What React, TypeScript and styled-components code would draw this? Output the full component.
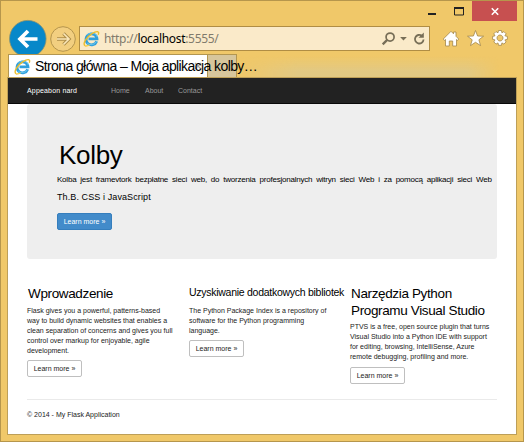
import React from 'react';
import styled, { createGlobalStyle, css } from 'styled-components';

const Global = createGlobalStyle`
  *{box-sizing:border-box}
  body{margin:0;overflow:hidden;font-family:"Liberation Sans",Arial,sans-serif}
  p,h1,h2{margin:0;font-weight:400}
`;

const Window = styled.div`
  width:524px;height:442px;background:#f0c869;border:1px solid #b6964c;
  display:flex;flex-direction:column;
`;
const TitleBar = styled.div`
  height:20px;display:flex;justify-content:flex-end;padding-right:6px;
`;
const WindowButtons = styled.svg`display:block;width:98px;height:20px;`;
const AddressRow = styled.div`
  height:33px;display:flex;align-items:flex-start;padding-left:7px;
`;
const NavButtons = styled.svg`display:block;width:71px;height:33px;flex:none;`;
const AddressBox = styled.div`
  width:351px;height:25px;margin-top:5px;border:1px solid #b08d44;background:#faeac9;
  display:flex;align-items:center;padding-left:3px;
`;
const Url = styled.div`
  width:294px;padding-left:4px;color:#000;white-space:nowrap;
  font:12px/20px "Noto Sans","Open Sans",sans-serif;letter-spacing:-0.32px;
  padding-bottom:0;margin-top:1px;
  span{color:#817b6c}
`;
const AddressIcons = styled.svg`display:block;width:50px;height:23px;`;
const ToolIcons = styled.svg`display:block;width:76px;height:24px;margin:5px 0 0 10px;`;

const TabRow = styled.div`
  height:23px;margin-left:7px;display:flex;width:508px;position:relative;
`;
const TabGlow = styled.div`
  flex:1;height:23px;
  background:linear-gradient(to bottom,transparent 2px,#e2c983 17px);
  mask-image:linear-gradient(to right,transparent,#000 60px,#000 230px,transparent 262px);
`;
const Tab = styled.div`
  width:200px;height:23px;background:#fff;border:1px solid #b39650;border-bottom:0;
  display:flex;align-items:center;padding-left:5px;gap:4px;flex:none;
`;
const NewTab = styled.div`
  width:29px;height:23px;background:#d7c69c;border:1px solid #b39650;border-left:0;border-bottom:0;
`;
const TabClose = styled.svg`position:absolute;left:186px;top:8px;width:8px;height:8px;`;
const TabTitle = styled.div`
  white-space:nowrap;font:14px/21px "Liberation Sans",Arial,sans-serif;color:#000;
  letter-spacing:-0.6px;position:relative;z-index:1;
`;
const Viewport = styled.div`
  width:510px;height:358px;margin-left:6px;border:1px solid #bd9f58;background:#fff;
`;
const Navbar = styled.nav`
  height:26px;background:#222;border-bottom:1px solid #080808;
  display:flex;align-items:center;padding-left:19px;
`;
const NavItem = styled.span<{ $w: number; $brand?: boolean }>`
  width:${p => p.$w}px;white-space:nowrap;font-size:7px;line-height:10px;color:#999;
  ${p => p.$brand && css`color:#fff;letter-spacing:0.17px;`}
`;
const Page = styled.main`padding:0 19px;`;
const Jumbotron = styled.section`
  height:155px;background:#eee;border-radius:3px;padding:35px 0 0 30px;color:#000;
`;
const Heading = styled.h1`font-size:26px;line-height:32px;padding-left:2px;letter-spacing:-0.3px;`;
const Lead = styled.p`
  white-space:nowrap;font-size:8px;line-height:12px;height:18px;padding-top:3px;
  letter-spacing:-0.22px;word-spacing:1.95px;
`;
const SubLead = styled.p`
  white-space:nowrap;font-size:9px;line-height:12px;margin-top:2px;height:22px;letter-spacing:0.1px;
`;
const Button = styled.button<{ $primary?: boolean }>`
  display:block;width:55px;height:17px;padding:0;border-radius:2px;border:1px solid #bfbfbf;
  background:#fff;color:#222;font:7px/15px "Liberation Sans",Arial,sans-serif;white-space:nowrap;
  ${p => p.$primary && css`background:#428bca;border-color:#357ebd;color:#fff;`}
`;
const Columns = styled.section`
  display:grid;grid-template-columns:162px 161px 147px;height:140px;padding-top:26px;
`;
const Title = styled.h2<{ $small?: boolean; $gap?: number }>`
  white-space:nowrap;font-size:13.5px;line-height:17px;color:#000;padding-left:1px;
  margin-bottom:${p => p.$gap ?? 4}px;letter-spacing:-0.36px;
  ${p => p.$small && css`font-size:10.5px;line-height:15px;padding-left:0;margin-bottom:6px;letter-spacing:-0.27px;`}
`;
const Copy = styled.p`
  font-size:7px;line-height:10px;color:#222;white-space:nowrap;margin-bottom:4px;
`;
const TallColumn = styled.article`${Copy}{margin-bottom:5px}`;
const Footer = styled.footer`
  border-top:1px solid #eaeaea;padding-top:10px;font-size:7px;line-height:10px;color:#222;
`;

const IELogo = styled.svg`width:17px;height:17px;flex:none;display:block;`;
const Explorer = () => (
  <IELogo viewBox="0 0 17 17" fill="none">
    <path d="M13.7 11.2A5.5 5.5 0 1 1 14 8.9H5.5" stroke="#2f9fdb" strokeWidth="2.8" />
    <path d="M13.5 11.4A5.8 5.8 0 0 1 4.1 13M4.2 5.2A6 6 0 0 1 14.4 7" stroke="#6cc8f0" strokeWidth=".9" />
    <path d="M2 15.8C-.8 13.5 3.8 6.8 9 3.6c4.6-2.9 7.8-2.8 6.2 1.1" stroke="#ecbd2c" strokeWidth="1.4" />
    <path d="M2 15.8c1.2.5 2.9-.1 4.6-1.1" stroke="#f3cc43" strokeWidth="1.3" />
  </IELogo>
);

const columns = [
  { title: ['Wprowadzenie'], lines: ['Flask gives you a powerful, patterns-based', 'way to build dynamic websites that enables a', 'clean separation of concerns and gives you full', 'control over markup for enjoyable, agile', 'development.'] },
  { title: ['Uzyskiwanie dodatkowych bibliotek'], small: true, lines: ['The Python Package Index is a repository of', 'software for the Python programming', 'language.'] },
  { title: ['Narzędzia Python', 'Programu Visual Studio'], gap: 3, lines: ['PTVS is a free, open source plugin that turns', 'Visual Studio into a Python IDE with support', 'for editing, browsing, IntelliSense, Azure', 'remote debugging, profiling and more.'] },
];

const Lines = ({ items }: { items: string[] }) => (
  <>{items.map((t, i) => <React.Fragment key={t}>{i > 0 && <br />}{t}</React.Fragment>)}</>
);

export default function App() {
  return (
    <Window>
      <Global />
      <TitleBar>
        <WindowButtons viewBox="0 0 98 20">
          <path d="M9 12h8v2H9z" fill="#222" />
          <path d="M35.5 7.5h9v6.500h-9z" fill="none" stroke="#222" />
          <path d="M35 6h10v2H35z" fill="#222" />
          <path d="M53 0h45v20H53z" fill="#c75050" />
          <path d="M72.8 7.3l6.400 6.400m0-6.400l-6.400 6.400" stroke="#fff" strokeWidth="1.6" />
        </WindowButtons>
      </TitleBar>
      <AddressRow>
        <NavButtons viewBox="8 21 71 33" overflow="visible">
          <circle cx="27.8" cy="38.7" r="18.3" fill="#0788c9" stroke="#8a9270" strokeWidth=".8" />
          <path d="M37.500 39H20.500m7.500-8l-8 8 8 8" fill="none" stroke="#fff" strokeWidth="3.7" />
          <circle cx="63" cy="39" r="12.3" fill="#f2cf80" stroke="#b5954d" />
          <path d="M57 39h11.500m-5-5.500l5.500 5.500-5.500 5.500" fill="none" stroke="#ad8d48" strokeWidth="3.4" />
          <path d="M57 39h11.500m-5-5.500l5.500 5.500-5.500 5.500" fill="none" stroke="#fae7b9" strokeWidth="1.6" />
        </NavButtons>
        <AddressBox>
          <Explorer />
          <Url><span>http://</span>localhost<span>:5555/</span></Url>
          <AddressIcons viewBox="378 28 50 23" fill="none" stroke="#776e57">
            <circle cx="387.500" cy="38" r="4.200" strokeWidth="1.8" />
            <path d="M384.500 41l-4.700 4.700" strokeWidth="2.4" />
            <path d="M398 38h7l-3.500 3.500z" fill="#776e57" stroke="none" />
            <path d="M420.700 36.600A4.500 4.500 0 1 0 422.500 40.500" strokeWidth="1.9" />
            <path d="M422.800 33.200v5.600h-5.600z" fill="#776e57" stroke="none" />
          </AddressIcons>
        </AddressBox>
        <ToolIcons viewBox="440 26 76 24" fill="#fff" stroke="#a2874a" strokeWidth=".8">
          <path d="M443.300 39l7.700-7.700 2.500 2.500V32h2.500v4.300l2.700 2.700-1.200 1.500-1-1V46h-3.800v-5h-3.400v5h-3.800v-6.500l-1 1z" />
          <path d="M475.500 30.500l2.100 5.500 6 .2-4.700 3.600 1.700 5.800-5.100-3.300-5 3.300 1.700-5.800-4.700-3.600 5.900-.2z" />
          <path fillRule="evenodd" d="M498.500 30.500h3l.4 2.300 2-1.200 2.200 2.200-1.200 2 2.500.6v3l-2.500.5 1.200 2-2.200 2.200-2-1.200-.4 2.400h-3l-.5-2.400-2 1.200-2.200-2.200 1.200-2-2.400-.5v-3l2.400-.6-1.200-2 2.200-2.200 2 1.200zM500 35a3 3 0 1 0 .01 0" />
        </ToolIcons>
      </AddressRow>
      <TabRow>
        <Tab>
          <Explorer />
          <TabTitle>Strona główna – Moja aplikacja kolby…</TabTitle>
        </Tab>
        <NewTab />
        <TabGlow />
        <TabClose viewBox="0 0 8 8"><path d="M1 1l6 6m0-6L1 7" stroke="#aaa" strokeWidth="1.4" /></TabClose>
      </TabRow>
      <Viewport>
        <Navbar>
          <NavItem $w={84} $brand>Appeabon nard</NavItem>
          <NavItem $w={34}>Home</NavItem>
          <NavItem $w={33}>About</NavItem>
          <NavItem $w={40}>Contact</NavItem>
        </Navbar>
        <Page>
          <Jumbotron>
            <Heading>Kolby</Heading>
            <Lead>Kolba jest framevtork bezpłatne sieci web, do tworzenia profesjonalnych witryn sieci Web i za pomocą aplikacji sieci Web</Lead>
            <SubLead>Th.B. CSS i JavaScript</SubLead>
            <Button $primary>Learn more »</Button>
          </Jumbotron>
          <Columns>
            {columns.map(c => {
              const Column = c.title.length > 1 ? TallColumn : 'article';
              return (
                <Column key={c.title[0]}>
                  <Title $small={c.small} $gap={c.gap}><Lines items={c.title} /></Title>
                  <Copy><Lines items={c.lines} /></Copy>
                  <Button>Learn more »</Button>
                </Column>
              );
            })}
          </Columns>
          <Footer>© 2014 - My Flask Application</Footer>
        </Page>
      </Viewport>
    </Window>
  );
}
